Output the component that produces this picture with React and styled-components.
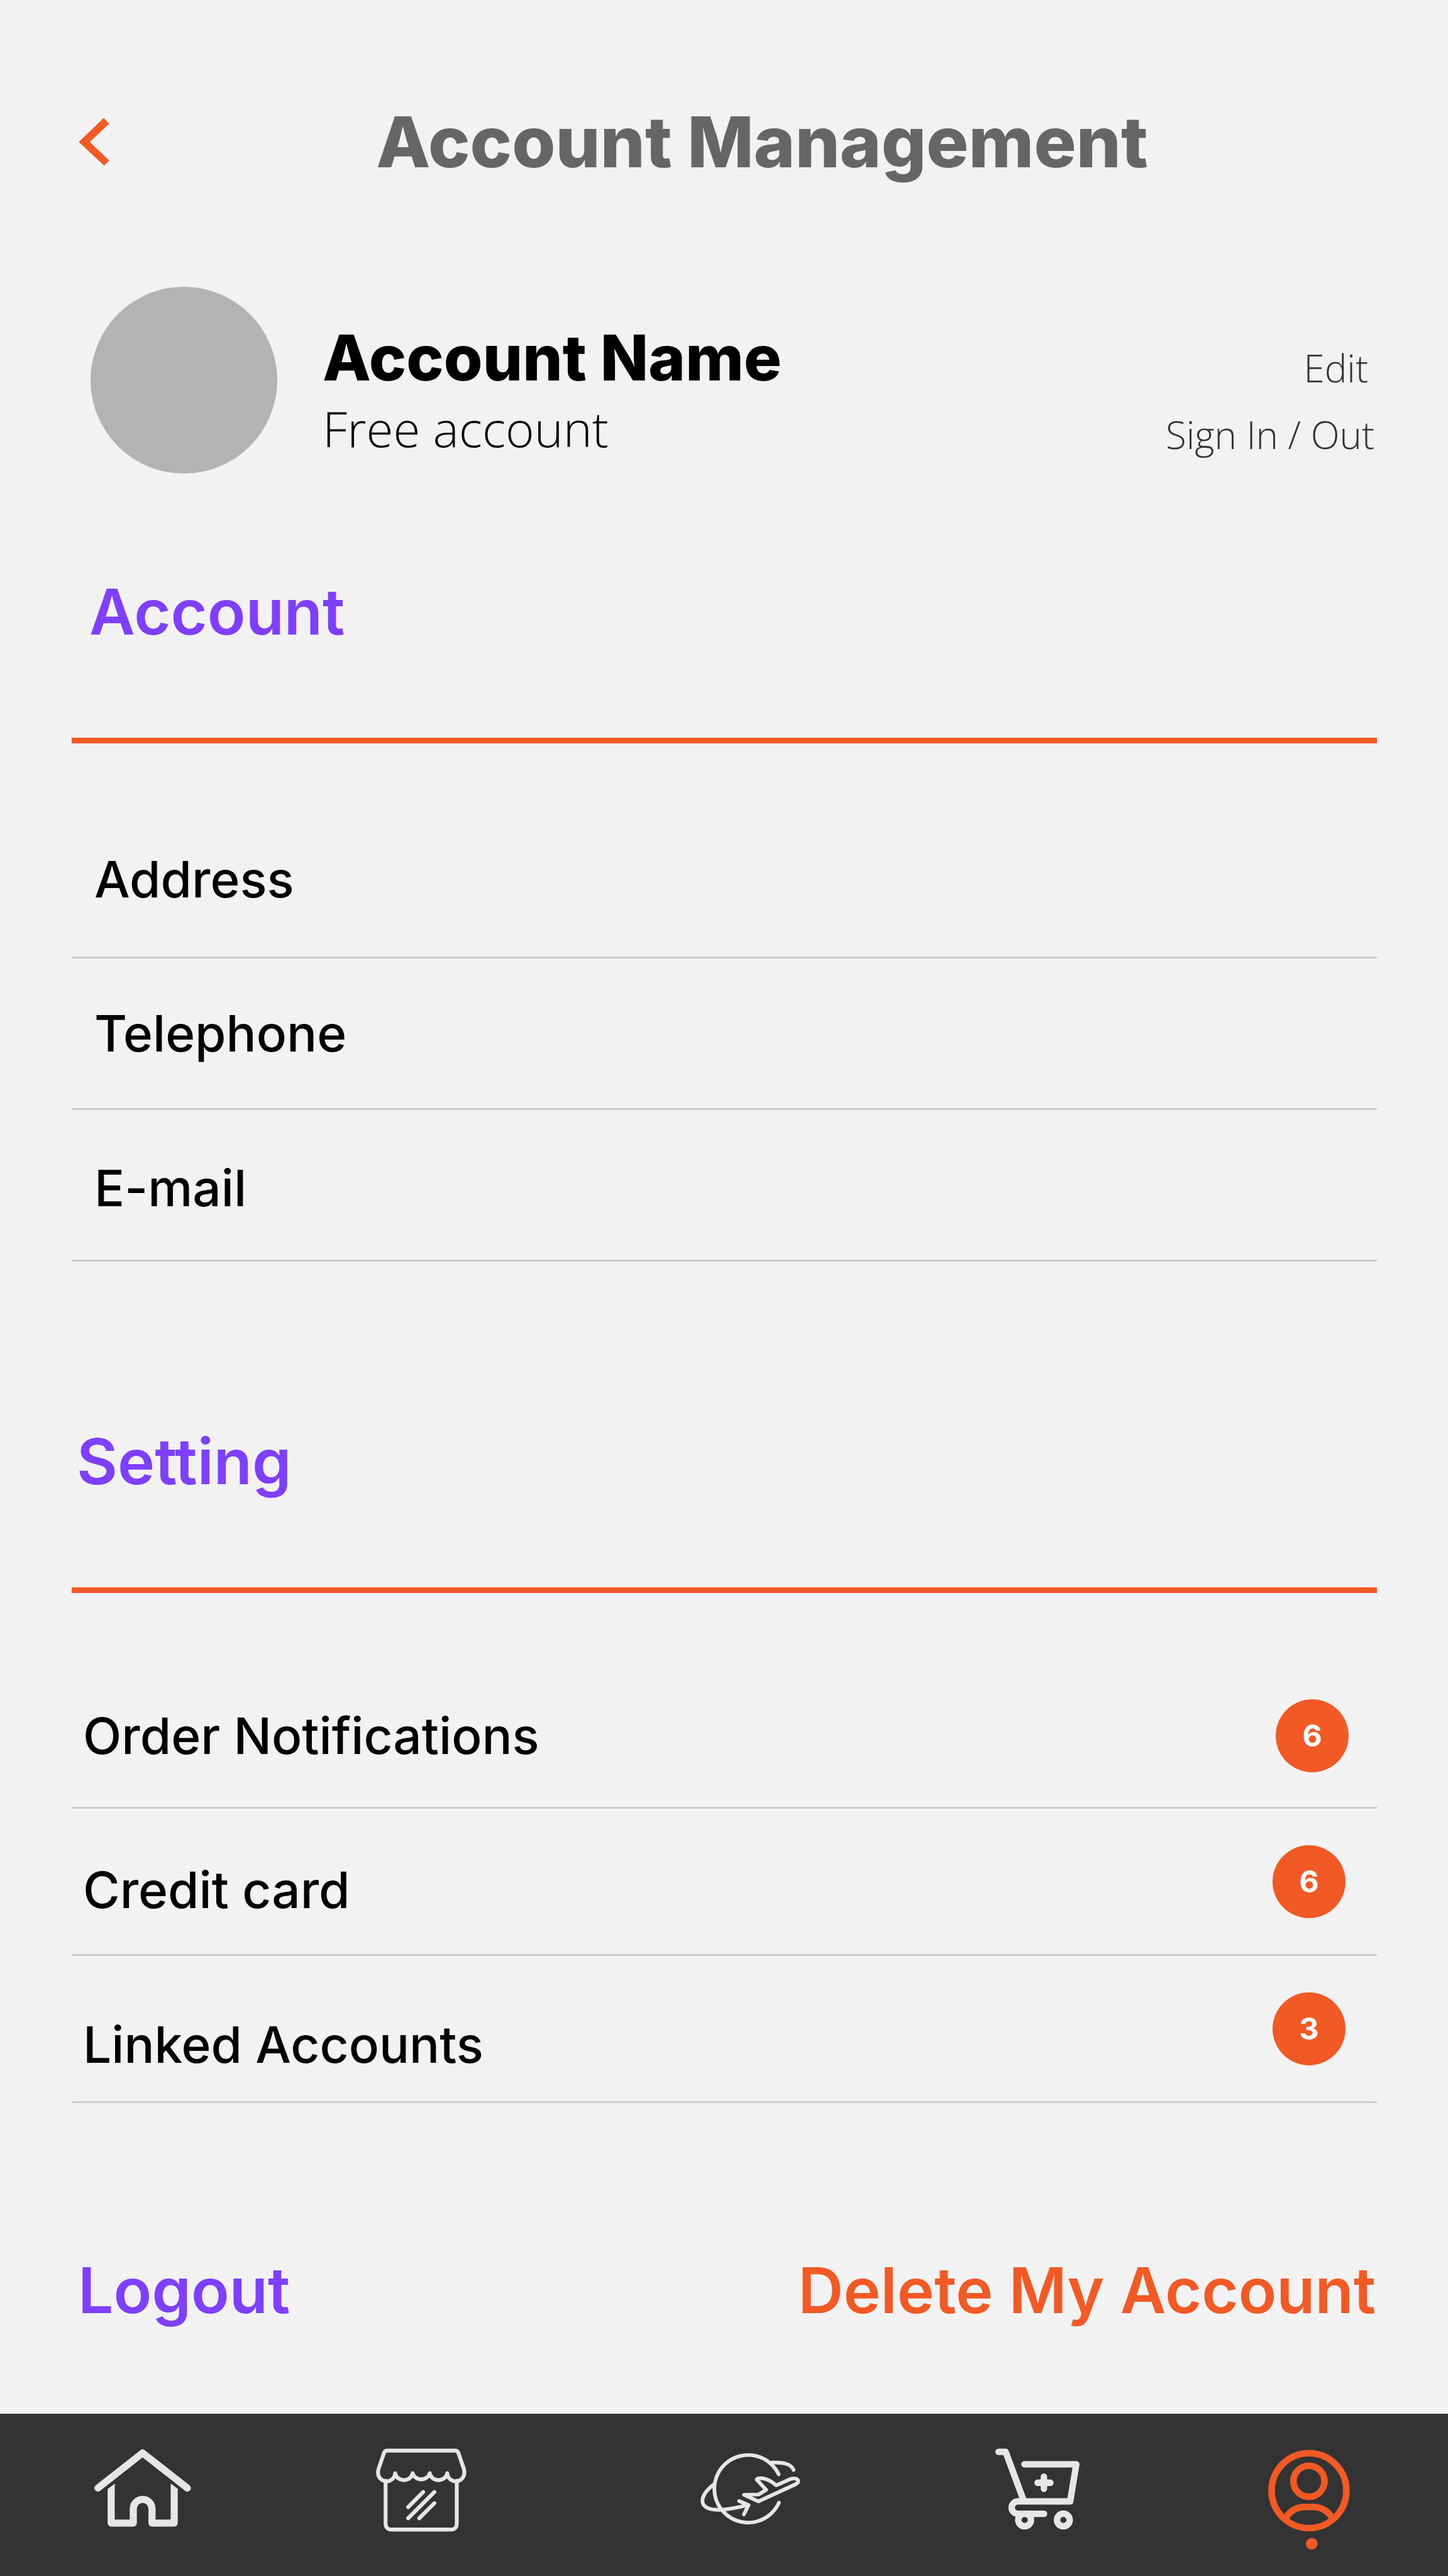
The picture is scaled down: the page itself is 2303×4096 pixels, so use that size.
import React from "react";
import styled, { createGlobalStyle } from "styled-components";

const colors = {
  page: "#f2f2f2",
  bar: "#333333",
  icon: "#e6e6e6",
  orange: "#f15a24",
  violet: "#7f3fff",
  title: "#666666",
  avatar: "#b3b3b3",
  rule: "#cccccc",
};

const GlobalStyle = createGlobalStyle`
  *, *::before, *::after { box-sizing: border-box; }
  body { margin: 0; background: ${colors.page}; font-family: Inter, "Liberation Sans", sans-serif; color: #000; }
  button { font: inherit; color: inherit; background: none; border: 0; padding: 0; margin: 0; cursor: pointer; }
  a { color: inherit; text-decoration: none; }
  h1, h2, p, ul { margin: 0; padding: 0; }
  ul { list-style: none; }
  svg { display: block; }
`;

const Page = styled.div`
  display: flex;
  flex-direction: column;
  min-height: 100vh;
`;

const Main = styled.main`
  flex: 1;
  padding: 160px 113px 0 114px;
`;

const Header = styled.header`
  display: flex;
  align-items: center;
  gap: 60px;
  padding-left: 11px;
`;

const Title = styled.h1`
  flex: 1;
  text-align: center;
  font-size: 112px;
  line-height: 130px;
  font-weight: 800;
  color: ${colors.title};
`;

const Profile = styled.section`
  display: flex;
  align-items: flex-end;
  gap: 72px;
  margin-top: 166px;
  padding: 0 4px 0 30px;
`;

const Avatar = styled.div`
  width: 297px;
  height: 297px;
  flex: none;
  border-radius: 50%;
  background: ${colors.avatar};
`;

const Identity = styled.div`
  flex: 1;
  padding-bottom: 22px;
`;

const Name = styled.h2`
  font-size: 100px;
  line-height: 112px;
  font-weight: 800;
`;

const Plan = styled.p`
  margin-top: 6px;
  font-family: "Open Sans", sans-serif;
  font-size: 78px;
  line-height: 100px;
  font-weight: 300;
`;

const ProfileLinks = styled.nav`
  display: flex;
  flex-direction: column;
  align-items: flex-end;
  gap: 26px;
  padding-bottom: 22px;
`;

const ProfileLink = styled.a`
  padding-right: ${(p) => p.$inset || 0}px;
  font-family: "Open Sans", sans-serif;
  font-size: 60px;
  line-height: 80px;
  font-weight: 300;
  color: ${colors.bar};
`;

const Section = styled.section`
  margin-top: ${(p) => p.$space}px;
`;

const Heading = styled.h2`
  padding: 0 0 140px ${(p) => p.$indent}px;
  font-size: 100px;
  line-height: 120px;
  font-weight: 600;
  color: ${colors.violet};
  border-bottom: 9px solid ${colors.orange};
  box-sizing: content-box;
`;

const List = styled.ul`
  padding-top: ${(p) => p.$space}px;
`;

const Row = styled.button`
  display: flex;
  align-items: center;
  justify-content: space-between;
  width: 100%;
  height: ${(p) => p.$height}px;
  padding: 0 ${(p) => p.$end || 0}px 0 ${(p) => p.$indent}px;
  border-bottom: 3px solid ${colors.rule};
  text-align: left;
`;

const Label = styled.span`
  padding-top: ${(p) => p.$drop || 0}px;
  font-size: 80px;
  line-height: 96px;
  font-weight: 500;
`;

const Badge = styled.span`
  display: flex;
  align-items: center;
  justify-content: center;
  width: 116px;
  height: 116px;
  border-radius: 50%;
  background: ${colors.orange};
  color: #fff;
  font-size: 48px;
  line-height: 56px;
  font-weight: 700;
`;

const Actions = styled.div`
  display: flex;
  justify-content: space-between;
  margin-top: 238px;
  padding: 0 2px 136px 10px;
`;

const Action = styled.button`
  && {
    color: ${(p) => p.$color};
    font-size: 100px;
    line-height: 120px;
    font-weight: 600;
  }
`;

const TabBar = styled.nav`
  display: grid;
  grid-template-columns: 448fr 516fr 469fr 434fr 286fr;
  height: 258px;
  padding: 54px 0 0 150px;
  background: ${colors.bar};
`;

const Tab = styled.a`
  justify-self: start;
  color: ${(p) => (p.$active ? colors.orange : colors.icon)};
`;

const TabIcon = ({ x, width, children, stroke }) => (
  <svg
    viewBox={`${x} 130 ${width} 672`}
    height="165"
    width={Math.round(width * 0.2456)}
    fill="none"
    stroke="currentColor"
    strokeWidth={stroke}
    strokeLinecap="round"
    strokeLinejoin="round"
    aria-hidden="true"
  >
    {children}
  </svg>
);

const HomeIcon = () => (
  <TabIcon x={72} width={626} stroke={46}>
    <path d="M95 391 384 164 674 391" />
    <path strokeLinecap="butt" d="M180.500 400V618H324V525a60.500 60.500 0 0 1 121 0V618H589V400" />
    <path stroke="none" fill="currentColor" d="M157 402V399L204 362V402ZM566 402V362L612 396V402Z" />
  </TabIcon>
);

const ShopIcon = () => (
  <TabIcon x={95} width={586} stroke={25}>
    <path d="M168 149H608Q622 149 628 163L664 266Q667 278 667 288A55 56 0 0 1 556 295A57 52 0 0 1 443 295A57 52 0 0 1 332 295A57 52 0 0 1 219 295A55 56 0 0 1 108 288Q108 278 112 266L147 163Q153 149 168 149Z" />
    <path d="M157 344V625a34 35 0 0 0 34 35H584a34 35 0 0 0 34-35V344" />
    <path d="M303 515 400 417M303 587 473 417M375 587 473 489" />
  </TabIcon>
);

const TravelIcon = () => (
  <TabIcon x={96} width={648} stroke={24}>
    <path d="M603 302A219 219 0 1 0 605 486" />
    <path d="M552 226C625 224 682 230 700 274" />
    <path d="M185 367C125 410 96 462 115 498C150 550 260 536 404 501" />
    <path d="M347 475 408 501 378 562" />
    <path d="M378 435 472 478 716 365C746 348 724 323 686 331C674 333 640 352 587 373C555 345 510 322 472 329C462 331 458 334 464 340L522 403 473 433Z" />
  </TabIcon>
);

const CartIcon = () => (
  <TabIcon x={114} width={546} stroke={42}>
    <path d="M135 157H181L297 470" />
    <path d="M303 237H639L599 478H260a40 40 0 0 0 0 80H430" />
    <circle cx="304" cy="598" r="41" />
    <circle cx="555" cy="598" r="41" />
    <path d="M388 357H471M429 318V396" />
  </TabIcon>
);

const UserIcon = () => (
  <TabIcon x={114} width={531} stroke={43}>
    <circle cx="379" cy="408" r="243" />
    <circle cx="379" cy="347" r="101" />
    <path strokeLinecap="butt" d="M229 583C258 540 300 514 350 514H408C458 514 500 540 529 583" />
    <circle cx="397" cy="753" r="38" stroke="none" fill="currentColor" />
  </TabIcon>
);

const accountRows = [
  { label: "Address", height: 250 },
  { label: "Telephone", height: 241 },
  { label: "E-mail", height: 241, drop: 10 },
];

const settingRows = [
  { label: "Order Notifications", count: 6, height: 229, end: 45 },
  { label: "Credit card", count: 6, height: 234, end: 50, drop: 26 },
  { label: "Linked Accounts", count: 3, height: 234, end: 50, drop: 50 },
];

const tabs = [
  { name: "Home", Icon: HomeIcon },
  { name: "Shop", Icon: ShopIcon },
  { name: "Travel", Icon: TravelIcon },
  { name: "Cart", Icon: CartIcon },
  { name: "Account", Icon: UserIcon, active: true },
];

export default function App() {
  return (
    <Page>
      <GlobalStyle />
      <Main>
        <Header>
          <button type="button" aria-label="Back">
            <svg width="49" height="77" viewBox="169 254 66 105" fill={colors.orange}>
              <path d="M223 255 235 267 193 307 235 347 224 358 169 307Z" />
            </svg>
          </button>
          <Title>Account Management</Title>
        </Header>

        <Profile>
          <Avatar />
          <Identity>
            <Name>Account Name</Name>
            <Plan>Free account</Plan>
          </Identity>
          <ProfileLinks>
            <ProfileLink href="#edit" $inset={10}>Edit</ProfileLink>
            <ProfileLink href="#sign">Sign In / Out</ProfileLink>
          </ProfileLinks>
        </Profile>

        <Section $space={160}>
          <Heading $indent={28}>Account</Heading>
          <List $space={92}>
            {accountRows.map((row) => (
              <li key={row.label}>
                <Row type="button" $height={row.height} $indent={36}>
                  <Label $drop={row.drop}>{row.label}</Label>
                </Row>
              </li>
            ))}
          </List>
        </Section>

        <Section $space={258}>
          <Heading $indent={8}>Setting</Heading>
          <List $space={114}>
            {settingRows.map((row) => (
              <li key={row.label}>
                <Row type="button" $height={row.height} $indent={18} $end={row.end}>
                  <Label $drop={row.drop}>{row.label}</Label>
                  <Badge>{row.count}</Badge>
                </Row>
              </li>
            ))}
          </List>
        </Section>

        <Actions>
          <Action type="button" $color={colors.violet}>Logout</Action>
          <Action type="button" $color={colors.orange}>Delete My Account</Action>
        </Actions>
      </Main>

      <TabBar>
        {tabs.map(({ name, Icon, active }) => (
          <Tab key={name} href={`#${name.toLowerCase()}`} aria-label={name} $active={active}>
            <Icon />
          </Tab>
        ))}
      </TabBar>
    </Page>
  );
}
